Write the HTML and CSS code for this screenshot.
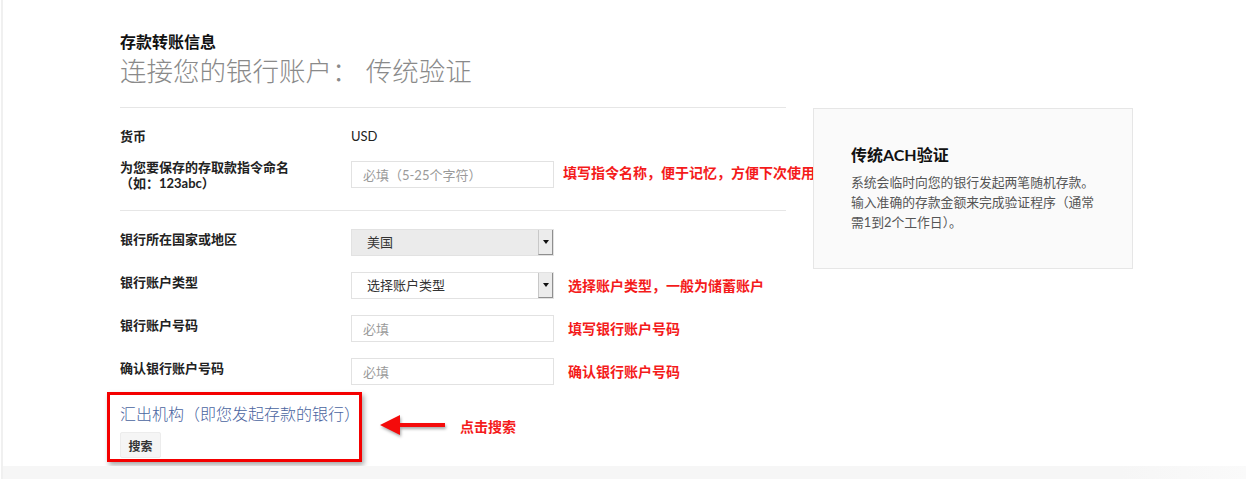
FILE: index.html
```html
<!DOCTYPE html>
<html lang="zh-CN">
<head>
    <meta charset="UTF-8">
    <meta name="viewport" content="width=device-width, initial-scale=1.0">
    <title>存款转账信息</title>
    <link rel="stylesheet" href="styles.css">
</head>
<body>

<div class="page">
    <div class="main">
        <!-- Form Column -->
        <div class="form-col">
            <div class="heading">
                <div class="heading-title">存款转账信息</div>
                <h1 class="heading-sub">连接您的银行账户： 传统验证</h1>
            </div>

            <hr class="divider">

            <div class="row row-static">
                <div class="row-label">货币</div>
                <div class="row-value">USD</div>
            </div>
            <div class="row row-name">
                <div class="row-label">为您要保存的存取款指令命名<br>（如：123abc）</div>
                <input class="field" type="text" placeholder="必填（5-25个字符）">
                <span class="note note-near">填写指令名称，便于记忆，方便下次使用</span>
            </div>

            <hr class="divider divider-low">

            <div class="row">
                <div class="row-label">银行所在国家或地区</div>
                <div class="select select-disabled">
                    <span class="select-text">美国</span>
                    <span class="select-btn"><span class="select-caret"></span></span>
                </div>
            </div>
            <div class="row">
                <div class="row-label">银行账户类型</div>
                <div class="select">
                    <span class="select-text">选择账户类型</span>
                    <span class="select-btn"><span class="select-caret"></span></span>
                </div>
                <span class="note">选择账户类型，一般为储蓄账户</span>
            </div>
            <div class="row">
                <div class="row-label">银行账户号码</div>
                <input class="field" type="text" placeholder="必填">
                <span class="note">填写银行账户号码</span>
            </div>
            <div class="row">
                <div class="row-label">确认银行账户号码</div>
                <input class="field" type="text" placeholder="必填">
                <span class="note">确认银行账户号码</span>
            </div>

            <!-- Sending institution, marked up in red -->
            <div class="mark-row">
                <div class="mark-box">
                    <div class="bank-title">汇出机构（即您发起存款的银行）</div>
                    <button class="search-btn">搜索</button>
                </div>
                <svg class="mark-arrow" width="68" height="26" viewBox="0 0 68 26">
                    <path d="M1 11 L21 1 L21 9 L66 9 L66 13 L21 13 L21 21 Z" fill="#f40b0b"/>
                </svg>
                <span class="note mark-note">点击搜索</span>
            </div>
        </div>

        <!-- Info Card -->
        <div class="info-card">
            <h2 class="info-title">传统ACH验证</h2>
            <p class="info-text">系统会临时向您的银行发起两笔随机存款。输入准确的存款金额来完成验证程序（通常需1到2个工作日）。</p>
        </div>
    </div>
    <div class="page-foot"></div>
</div>

</body>
</html>
```

FILE: styles.css
```css
body {
    margin: 0;
    padding: 0;
    background-color: #ffffff;
    font-family: Lato, "Noto Sans CJK SC", sans-serif;
    color: #222;
}

.page {
    margin-left: 1px;
    border-left: 2px solid #f0f0f0;
    height: 479px;
    box-sizing: border-box;
    display: flex;
    flex-direction: column;
}

.main {
    flex: 1;
    display: flex;
    gap: 27px;
    padding-left: 117px;
}

/* Heading */
.form-col {
    width: 666px;
    flex-shrink: 0;
}

.heading {
    padding-top: 31px;
}

.heading-title {
    font-size: 16px;
    font-weight: bold;
    line-height: 22px;
    color: #111;
}

.heading-sub {
    margin: 1px 0 0 0;
    font-size: 26.5px;
    font-weight: 300;
    line-height: 34px;
    color: #8a8a8a;
}

.divider {
    margin: 19px 0 0 0;
    border: none;
    border-top: 1px solid #e6e6e6;
}

.divider-low {
    margin-top: 19px;
}

/* Form rows */
.row {
    display: flex;
    align-items: flex-start;
    margin-top: 16px;
}

.divider + .row {
    margin-top: 18px;
}

.row-label {
    width: 231px;
    flex-shrink: 0;
    font-size: 13px;
    font-weight: bold;
    line-height: 16px;
    padding-top: 2px;
    color: #222;
}

.row-static .row-value {
    font-size: 13px;
    line-height: 16px;
    padding-top: 2px;
    color: #222;
}

.row-name {
    margin-top: 15px;
}

.row-name .row-label {
    padding-top: 0;
}

.row-name .field {
    margin-top: 2px;
}

.field {
    width: 203px;
    height: 27px;
    flex-shrink: 0;
    box-sizing: border-box;
    border: 1px solid #e2e2e2;
    padding: 0 11px;
    font-family: Lato, "Noto Sans CJK SC", sans-serif;
    font-size: 13px;
    color: #333;
    outline: none;
}

.field::placeholder {
    color: #9a9a9a;
}

.select {
    width: 203px;
    height: 27px;
    flex-shrink: 0;
    box-sizing: border-box;
    border: 1px solid #e2e2e2;
    display: flex;
    align-items: stretch;
    background-color: #fff;
}

.select-disabled {
    background-color: #ebebeb;
}

.select-text {
    flex: 1;
    padding-left: 15px;
    font-size: 13px;
    line-height: 25px;
    color: #333;
}

.select-btn {
    width: 13px;
    display: flex;
    align-items: center;
    justify-content: center;
    background-color: #ececec;
    border-left: 1px solid #c8c8c8;
    border-right: 1px solid #8f8f8f;
    border-bottom: 1px solid #8f8f8f;
}

.select-caret {
    width: 0;
    height: 0;
    border-left: 3px solid transparent;
    border-right: 3px solid transparent;
    border-top: 4px solid #111;
}

/* Red annotation text */
.note {
    margin-left: 14px;
    white-space: nowrap;
    font-size: 14px;
    font-weight: bold;
    line-height: 27px;
    color: #f41b1b;
}

.note-near {
    margin-left: 9px;
}

/* Sending institution block */
.mark-row {
    display: flex;
    align-items: center;
    margin-top: 7px;
    margin-left: -13px;
}

.mark-box {
    width: 255px;
    height: 70px;
    flex-shrink: 0;
    box-sizing: border-box;
    border: 3px solid #f40000;
    padding: 8px 0 0 10px;
    box-shadow: 2px 3px 5px rgba(0, 0, 0, 0.35);
}

.bank-title {
    font-size: 16px;
    font-weight: 300;
    line-height: 22px;
    white-space: nowrap;
    color: #4a64a0;
}

.search-btn {
    display: block;
    margin-top: 7px;
    width: 41px;
    height: 26px;
    padding: 0;
    background-color: #f5f5f5;
    border: 1px solid #ececec;
    border-radius: 2px;
    font-family: Lato, "Noto Sans CJK SC", sans-serif;
    font-size: 12px;
    font-weight: bold;
    color: #333;
}

.mark-arrow {
    margin-left: 17px;
    filter: drop-shadow(1px 2px 1.5px rgba(0, 0, 0, 0.35));
}

.mark-note {
    margin-left: 13px;
    line-height: 20px;
}

/* Info card */
.info-card {
    margin-top: 108px;
    width: 320px;
    height: 161px;
    flex-shrink: 0;
    box-sizing: border-box;
    background-color: #fafafa;
    border: 1px solid #e6e6e6;
    padding: 35px 35px 0 37px;
}

.info-title {
    margin: 0;
    font-size: 16px;
    font-weight: bold;
    line-height: 22px;
    color: #111;
}

.info-text {
    margin: 6px 0 0 0;
    font-size: 12.8px;
    line-height: 20px;
    color: #555;
}

.page-foot {
    height: 13px;
    background: linear-gradient(to right, #f6f6f6 0%, #f6f6f6 90%, #fafafa 100%);
}
```
